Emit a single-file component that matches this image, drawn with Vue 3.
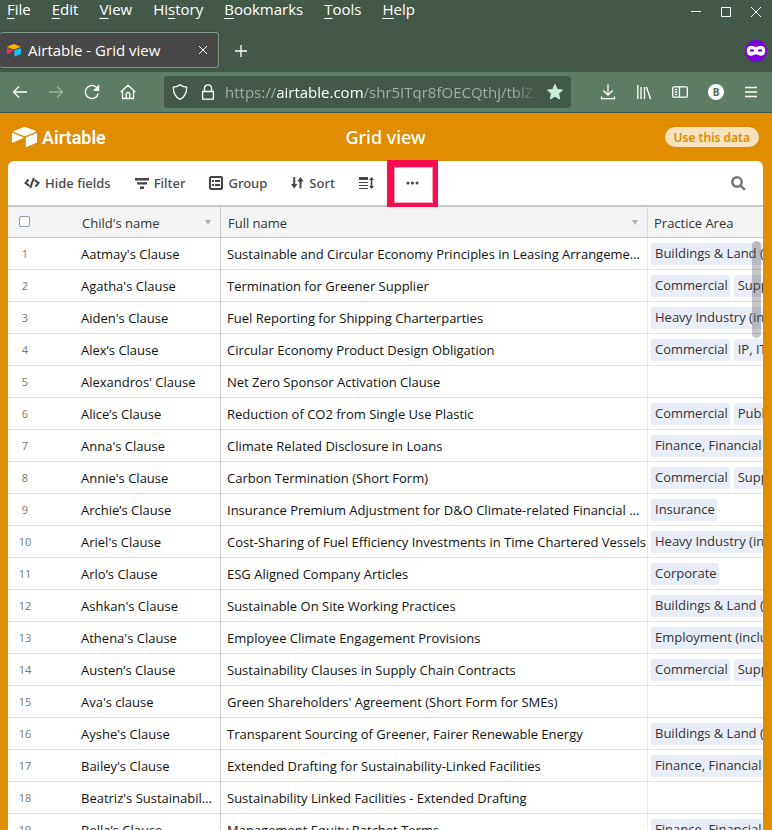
<script setup>
import { ref } from 'vue'

const menus = ['File', 'Edit', 'View', 'History', 'Bookmarks', 'Tools', 'Help']
const menuKeys = [0, 0, 0, 2, 0, 0, 0]

const land = 'Buildings & Land (including real estate)'
const heavy = 'Heavy Industry (including shipping)'
const finance = 'Finance, Financial Services'
const rows = [
  ["Aatmay's Clause", 'Sustainable and Circular Economy Principles in Leasing Arrangements for Products', [land]],
  ["Agatha's Clause", 'Termination for Greener Supplier', ['Commercial', 'Supply Chain']],
  ["Aiden's Clause", 'Fuel Reporting for Shipping Charterparties', [heavy]],
  ['Alex’s Clause', 'Circular Economy Product Design Obligation', ['Commercial', 'IP, IT']],
  ["Alexandros' Clause", 'Net Zero Sponsor Activation Clause', []],
  ['Alice’s Clause', 'Reduction of CO2 from Single Use Plastic', ['Commercial', 'Public']],
  ["Anna's Clause", 'Climate Related Disclosure in Loans', [finance]],
  ["Annie's Clause", 'Carbon Termination (Short Form)', ['Commercial', 'Supply Chain']],
  ['Archie’s Clause', 'Insurance Premium Adjustment for D&O Climate-related Financial Disclosures', ['Insurance']],
  ["Ariel's Clause", 'Cost-Sharing of Fuel Efficiency Investments in Time Chartered Vessels', [heavy]],
  ['Arlo’s Clause', 'ESG Aligned Company Articles', ['Corporate']],
  ["Ashkan's Clause", 'Sustainable On Site Working Practices', [land]],
  ["Athena's Clause", 'Employee Climate Engagement Provisions', ['Employment (including pensions)']],
  ['Austen’s Clause', 'Sustainability Clauses in Supply Chain Contracts', ['Commercial', 'Supply Chain']],
  ["Ava's clause", "Green Shareholders' Agreement (Short Form for SMEs)", []],
  ["Ayshe's Clause", 'Transparent Sourcing of Greener, Fairer Renewable Energy', [land]],
  ["Bailey's Clause", 'Extended Drafting for Sustainability-Linked Facilities', [finance]],
  ["Beatriz's Sustainability Clause", 'Sustainability Linked Facilities - Extended Drafting', []],
  ['Bella’s Clause', 'Management Equity Ratchet Terms', [finance]]
]
const allSelected = ref(false)
</script>

<template>
  <div class="window">
    <header class="chrome">
      <div class="titlebar">
        <nav class="menus" aria-label="Application menu">
          <button v-for="(m, i) in menus" :key="m" class="menu">{{ m.slice(0, menuKeys[i]) }}<u>{{ m[menuKeys[i]] }}</u>{{ m.slice(menuKeys[i] + 1) }}</button>
        </nav>
        <div class="controls">
          <button aria-label="Minimize"><svg width="12" height="12" viewBox="0 0 12 12"><path d="M1 5.5h10" /></svg></button>
          <button aria-label="Maximize"><svg width="12" height="12" viewBox="0 0 12 12"><path d="M1.500 1.500h9v9h-9z" /></svg></button>
          <button aria-label="Close"><svg width="12" height="12" viewBox="0 0 12 12"><path d="M1 1l10 10M11 1L1 11" /></svg></button>
        </div>
      </div>

      <div class="tabs">
        <div class="tab">
          <svg class="favicon" width="16" height="14" viewBox="0 0 16 14">
            <path fill="#fcb400" d="M7 1.200 1.200 3.500v.5L7 6.200c.5.200 1 .2 1.500 0L14.500 4v-.5L8.600 1.200a2.500 2.500 0 0 0-1.600 0z" />
            <path fill="#18bfff" d="M8.300 7.400v5.800l.5.200 6.200-2.500V5.200l-6.300 1.900z" />
            <path fill="#f82b60" d="M1 5.200v5.900l.6.200 5.300-3.200v-.6L1.500 5.100z" />
          </svg>
          <span class="tab-title">Airtable - Grid view</span>
          <button class="tab-close" aria-label="Close tab"><svg width="10" height="10" viewBox="0 0 10 10"><path d="M1 1l8 8M9 1L1 9" /></svg></button>
        </div>
        <button class="new-tab" aria-label="New tab"><svg width="12" height="12" viewBox="0 0 12 12"><path d="M6 0v12M0 6h12" /></svg></button>
        <span class="private" role="img" aria-label="Private window">
          <svg width="22" height="22" viewBox="0 0 22 22">
            <circle cx="11" cy="11" r="11" fill="#8000d7" />
            <path fill="#fff" d="M6 6c2.300 0 3.500.8 5 .8S13.700 6 16 6c3 0 4.200 1.800 4.200 4.800s-1.400 5-4.200 5c-2.200 0-3.300-1.500-5-1.500s-2.800 1.500-5 1.500c-2.800 0-4.200-2-4.200-5S3 6 6 6z" />
            <ellipse cx="7" cy="10.500" rx="2.200" ry="1.300" fill="#8000d7" />
            <ellipse cx="15" cy="10.500" rx="2.200" ry="1.300" fill="#8000d7" />
          </svg>
        </span>
      </div>

      <div class="navbar">
        <div class="nav-buttons">
          <button aria-label="Back"><svg width="16" height="16" viewBox="0 0 16 16"><path d="M15 8H1.500M7 2.500L1.500 8 7 13.500" /></svg></button>
          <button aria-label="Forward" disabled><svg width="16" height="16" viewBox="0 0 16 16"><path d="M1 8h13.500M9 2.500L14.500 8 9 13.500" /></svg></button>
          <button aria-label="Reload"><svg width="16" height="16" viewBox="0 0 16 16"><path d="M14.200 9.500a6.500 6.500 0 1 1-1.700-6.100L14 5M14.500 1.500v4.500H10" /><path class="solid" d="M14.500 2v4h-4z" /></svg></button>
          <button aria-label="Home"><svg width="16" height="16" viewBox="0 0 16 16"><path d="M.8 8 8 1.200 15.200 8M2.500 6.800v7.700h11V6.800M6.200 14.500V10q0-1.500 1.800-1.500T9.800 10v4.500" /></svg></button>
        </div>
        <div class="urlbar">
          <svg width="16" height="16" viewBox="0 0 16 16"><path d="M8 .8C6 2.500 3.500 3 1.300 3.200 1.300 9 3 13 8 15.300 13 13 14.700 9 14.700 3.200 12.500 3 10 2.500 8 .8z" /></svg>
          <svg width="14" height="16" viewBox="0 0 14 16"><path d="M1.600 7.500h10.800v7.700H1.600zM3.500 7.500V4.300a3.500 3.500 0 0 1 7 0v3.200" /></svg>
          <a class="url" href="#">https://<b>airtable.com</b>/shr5ITqr8fOECQthj/tblZs</a>
          <button class="star" aria-label="Bookmark"><svg width="18" height="18" viewBox="0 0 18 18"><path d="M9 1.500l2.300 5 5.200.6-3.900 3.500 1.100 5.400L9 13.300 4.300 16l1.100-5.400-3.900-3.500 5.200-.6z" /></svg></button>
        </div>
        <div class="actions">
          <button aria-label="Downloads"><svg width="16" height="16" viewBox="0 0 16 16"><path d="M8 .5v10.500M3.300 6.500L8 11l4.700-4.500M1.500 12.500v2.200h13v-2.200" /></svg></button>
          <button aria-label="Library"><svg width="16" height="16" viewBox="0 0 16 16"><path d="M1.800 1v14M5 3v12M8.500 3v12M10.500 3l4 12" /></svg></button>
          <button aria-label="Sidebars"><svg width="16" height="16" viewBox="0 0 16 16"><path d="M2 2.800h12q1.300 0 1.300 1.200v8q0 1.200-1.300 1.200H2Q.7 13.200.7 12V4Q.7 2.800 2 2.800zM7.500 3v10M2.800 5.500h2.500M2.800 8h2.500M2.800 10.500h2.500" /></svg></button>
          <button class="badge" aria-label="Account">B</button>
          <button aria-label="Menu"><svg width="14" height="16" viewBox="0 0 14 16"><path d="M1 3.500h12M1 8h12M1 12.500h12" /></svg></button>
        </div>
      </div>
    </header>

    <main class="page">
      <div class="brandbar">
        <a class="brand" href="#">
          <svg width="26" height="22" viewBox="0 0 26 22">
            <path d="M11.500 1.300 1.700 5.100q-.7.400 0 .8l9.900 3.900q1.200.4 2.400 0l9.900-3.900q.7-.4 0-.8L14 1.300q-1.200-.5-2.500 0zM13.800 12v8.600q.1.600.7.400l10-4.200q.5-.2.500-.7V7.600q-.1-.6-.7-.4l-10 4q-.5.200-.5.800zM0 7.500v9q.1.500.7.300l10.700-4.900q.5-.4 0-.7L.6 7q-.5 0-.6.500z" />
          </svg>
          <span>Airtable</span>
        </a>
        <h1>Grid view</h1>
        <button class="use">Use this data</button>
      </div>

      <section class="sheet">
        <div class="toolbar">
          <button><svg width="16" height="14" viewBox="0 0 16 14"><path class="line" d="M4.500 3.500 1.500 7 5.500 10M11.500 10.500 14.500 7 10.500 4M9.700 2 6.300 12" /></svg>Hide fields</button>
          <button><svg width="14" height="14" viewBox="0 0 14 14"><path d="M0 2h14v2.500H0zM2 6.200h10v2.300H2zM5 10.500h4V13H5z" /></svg>Filter</button>
          <button><svg width="14" height="14" viewBox="0 0 14 14"><path class="line" d="M2 1h10q1 0 1 1v10q0 1-1 1H2q-1 0-1-1V2q0-1 1-1z" /><path d="M3 4h2v2H3zM6 4h5v2H6zM3 8h2v2H3zM6 8h5v2H6z" /></svg>Group</button>
          <button><svg width="13" height="14" viewBox="0 0 13 14"><path class="line" d="M3.200 1v9M9.500 12.500V4" /><path d="M0 8h6.400L3.200 12.500zM6.300 5.500h6.400L9.500 1z" /></svg>Sort</button>
          <button aria-label="Row height"><svg width="15" height="14" viewBox="0 0 15 14"><path d="M0 1h9v3H0zM0 6h9v1H0zM0 9h9v1H0zM0 12h9v1H0zM10 4l2.500-3L15 4h-1.700v6H15l-2.500 3-2.500-3h1.700V4z" /></svg></button>
          <button class="more" aria-label="More options"><svg width="13" height="4" viewBox="0 0 13 4"><circle cx="2" cy="2" r="1.500" /><circle cx="6.500" cy="2" r="1.500" /><circle cx="11" cy="2" r="1.500" /></svg></button>
          <button class="search" aria-label="Search"><svg width="15" height="15" viewBox="0 0 15 15"><circle cx="6" cy="6" r="4.700" /><path d="M9.300 9.300l4.500 4.500" /></svg></button>
        </div>

        <div class="grid">
          <table>
            <colgroup><col class="c-num" /><col class="c-name" /><col class="c-full" /><col /></colgroup>
            <thead>
              <tr>
                <th class="num"><input v-model="allSelected" type="checkbox" aria-label="Select all rows" /></th>
                <th class="name"><div class="head">Child's name<i class="caret"></i></div></th>
                <th><div class="head">Full name<i class="caret"></i></div></th>
                <th class="area-head"><div class="head">Practice Area</div></th>
              </tr>
            </thead>
            <tbody>
              <tr v-for="(r, i) in rows" :key="i">
                <td class="num">{{ i + 1 }}</td>
                <td class="name">{{ r[0] }}</td>
                <td class="full">{{ r[1] }}</td>
                <td class="area"><div class="chips"><span v-for="c in r[2]" :key="c" class="chip">{{ c }}</span></div></td>
              </tr>
            </tbody>
          </table>
          <span class="thumb"></span>
        </div>
      </section>
    </main>
  </div>
</template>

<style>
body { margin: 0; }
</style>

<style scoped>
* { box-sizing: border-box; }
.window { height: 100vh; display: flex; flex-direction: column; overflow: hidden; font-family: "Noto Sans", "Open Sans", sans-serif; font-size: 13px; color: #222; }
button { font: inherit; color: inherit; background: none; border: 0; padding: 0; display: flex; align-items: center; justify-content: center; }
a { color: inherit; text-decoration: none; }
svg { flex: none; display: block; }

.chrome { background: #42594a; color: #fff; border-bottom: 1px solid #42594a; font-family: "Open Sans", sans-serif; }
.chrome svg { fill: none; stroke: #fff; stroke-width: 1.3; }
.titlebar { display: flex; justify-content: space-between; height: 24px; padding: 0 10px 0 7px; }
.menus { display: flex; gap: 21px; height: 18px; }
.menu { display: block; font-size: 15px; line-height: 18px; }
.menu u { text-underline-offset: 3px; }
.controls { display: flex; gap: 18px; }
.controls svg { stroke-width: 1; }

.tabs { display: flex; align-items: center; height: 48px; padding-right: 5px; }
.tab { display: flex; align-items: center; gap: 6px; width: 219px; height: 36px; padding: 0 10px 0 6px; margin-top: 4px; background: #474847; border: 1px solid #81978a; border-left: 0; border-radius: 3px; box-shadow: 0 0 2px #2c3c31; }
.chrome .favicon, .chrome .private svg { stroke: none; }
.tab-title { flex: 1; font-size: 15px; }
.tab-close svg { stroke-width: 1; }
.new-tab { margin: 5px 0 0 16px; }
.private { margin: 5px 0 0 auto; }

.navbar { display: flex; align-items: center; height: 40px; padding: 0 14px 0 12px; background: #5d7c65; }
.nav-buttons { display: flex; gap: 20px; }
.nav-buttons button:disabled { opacity: .4; }
.nav-buttons .solid { fill: #fff; }
.urlbar { flex: 1; min-width: 0; display: flex; align-items: center; height: 32px; margin-left: 28px; padding: 0 7px 0 8px; background: #42594a; border-radius: 4px; }
.urlbar svg + svg { margin-left: 13px; }
.url { flex: 1; min-width: 0; margin: 0 8px 0 10px; overflow: hidden; white-space: nowrap; font-size: 15px; color: #9dafa2; mask-image: linear-gradient(to right, #000 92%, transparent); }
.url b { font-weight: 400; color: #fff; }
.chrome .star svg { fill: #c9eed7; stroke: #c9eed7; stroke-width: 1; stroke-linejoin: round; }
.actions { display: flex; align-items: center; gap: 20px; margin-left: 29px; }
.badge { width: 16px; height: 16px; border-radius: 50%; background: #fff; color: #4e6956; font-size: 10px; font-weight: 700; }

.page { flex: 1; min-height: 0; display: flex; flex-direction: column; padding: 0 9px 0 8px; background: #e08d00; }
.brandbar { display: grid; grid-template-columns: 1fr auto 1fr; align-items: center; height: 48px; padding: 0 4px; color: #fff; }
.brand { display: flex; align-items: center; gap: 4px; font-family: Roboto, sans-serif; font-size: 18px; font-weight: 600; }
.brand svg { fill: #fff; }
h1 { margin: 0; font-size: 18px; font-weight: 500; }
.use { justify-self: end; height: 20px; padding: 0 9px; border-radius: 10px; background: #f8e2bd; color: #e08d00; font-size: 12px; font-weight: 600; }

.sheet { flex: 1; min-height: 0; display: flex; flex-direction: column; background: #fff; border-radius: 6px 6px 0 0; }
.toolbar { display: flex; align-items: center; gap: 24px; height: 46px; padding: 0 17px 0 16px; border-bottom: 2px solid #c8c8c8; color: #4a4a4a; font-weight: 500; }
.toolbar button { gap: 5px; }
.toolbar svg { fill: #444; }
.toolbar .line { fill: none; stroke: #444; stroke-width: 2; }
.toolbar .more { position: relative; margin-left: 8px; }
.more::after { content: ""; position: absolute; inset: -21px -19px -23px; border: solid #f80d50; border-width: 7px 5px 5px 7px; box-shadow: inset 0 0 0 1px #fca6b9; }
.toolbar .search { margin-left: auto; }
.search svg { fill: none; stroke: #777; stroke-width: 2.500; }

.grid { flex: 1; min-height: 0; overflow: hidden; position: relative; font-family: "Open Sans", sans-serif; }
table { width: 100%; table-layout: fixed; border-collapse: separate; border-spacing: 0; }
.c-num { width: 34px; }
.c-name { width: 179px; }
.c-full { width: 427px; }
th, td { padding: 0 6px; border-bottom: 1px solid #dcdcdc; border-right: 1px solid #ebebeb; text-align: left; overflow: hidden; white-space: nowrap; text-overflow: ellipsis; }
th { height: 31px; padding: 1px 7px 0; background: #f4f4f4; border-bottom-color: #cbcbcb; border-right-color: #dcdcdc; font-weight: 400; color: #333; }
td { height: 32px; color: #111; }
th:last-child, td:last-child { border-right: 0; }
.num, th.num { padding: 0; border-right: 0; text-align: center; font-size: 11px; color: #777; }
td.name { padding-left: 39px; border-right-color: #c8c8c8; }
th.name { padding-left: 40px; border-right-color: #c8c8c8; }
td.full { padding-right: 0; }
th.area-head { padding-left: 6px; }
th input { appearance: none; display: block; width: 11px; height: 11px; margin: 0 auto 2px 11px; border: 1px solid #8c9ba5; border-radius: 2px; background: #fff; }
.head { display: flex; align-items: center; justify-content: space-between; }
.caret { border: solid transparent; border-width: 5px 3px 0; border-top-color: #b0b0b0; margin-right: 2px; }
td.area { padding: 0 0 0 3px; text-overflow: clip; }
.chips { display: flex; gap: 4px; }
.chip { flex: none; height: 22px; line-height: 21px; padding: 0 2px 0 4px; border-radius: 3px; background: #e9edf8; color: #333; }
.thumb { position: absolute; top: 34px; right: 2px; width: 9px; height: 97px; border-radius: 5px; background: rgba(90, 90, 90, .35); }
</style>
